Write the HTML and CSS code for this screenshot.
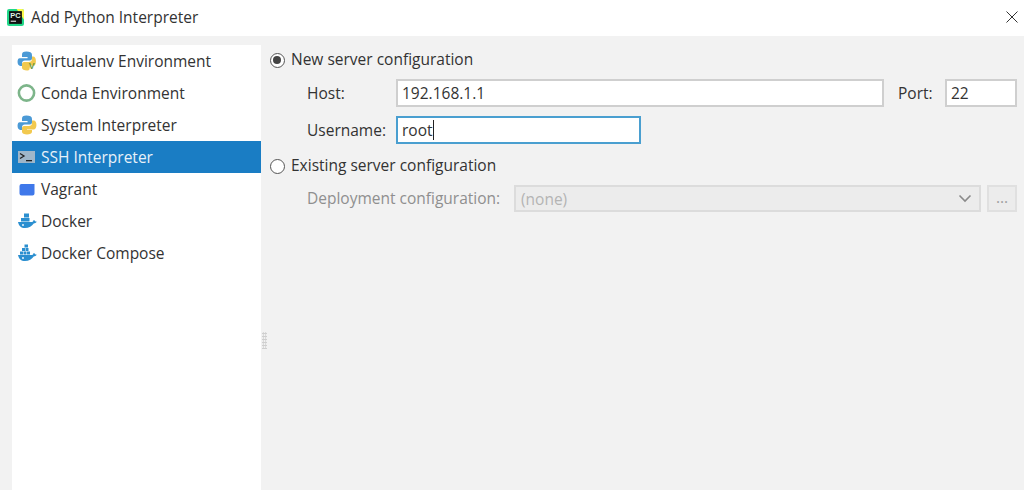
FILE: index.html
```html
<!DOCTYPE html>
<html lang="en">
<head>
  <meta charset="UTF-8" />
  <title>Add Python Interpreter</title>
  <link rel="stylesheet" href="styles.css">
</head>
<body>

  <div class="titlebar">
    <svg class="app-icon" width="17" height="17" viewBox="0 0 16 16">
      <rect x="0" y="0" width="16" height="16" rx="2" fill="#21d789"/>
      <path d="M9 0h5a2 2 0 0 1 2 2v8z" fill="#fcf84a"/>
      <rect x="2" y="2" width="12" height="12" fill="#111"/>
      <text x="3" y="8.5" class="app-icon-text">PC</text>
      <rect x="3.5" y="11" width="5" height="1" fill="#eee"/>
    </svg>
    <span class="title">Add Python Interpreter</span>
    <svg class="close" width="12" height="12" viewBox="0 0 12 12">
      <path d="M.5.5l11 11M11.500.5l-11 11" stroke="#333" stroke-width="1" fill="none"/>
    </svg>
  </div>

  <div class="content">
    <ul class="side">
      <li class="side-item">
        <svg class="venv-icon" width="20" height="20" viewBox="1 1 18 18">
          <path d="M9.500 1.500C6.500 1.500 5.500 2.500 5.500 4.500V6.500h5v1H3.500C2 7.500 1.500 9 1.500 11s1 3.500 2.500 3.500h1.500V12c0-1.500 1-2.500 2.500-2.500h4.500c1.500 0 2-1 2-2v-3c0-2-2-3-5-3z" fill="#4b9ad6"/>
          <path d="M14.500 6v2c0 2-1 3-3 3h-4c-1.500 0-2 1-2 2v3c0 1.500 2 2.500 4.500 2.500 1 0 1.500-.2 2-.4L13 14h4c.7-1 1-2.500 1-4 0-2.500-1-4-2.500-4z" fill="#f2c94f"/>
          <text x="11.500" y="17.500" class="venv-text">V</text>
        </svg>
        <span>Virtualenv Environment</span>
      </li>
      <li class="side-item">
        <svg width="20" height="20" viewBox="0 0 20 20">
          <circle cx="9.500" cy="10" r="7.600" fill="none" stroke="#7db58a" stroke-width="2.600"/>
        </svg>
        <span>Conda Environment</span>
      </li>
      <li class="side-item">
        <svg width="20" height="20" viewBox="1 1 18 18">
          <path d="M9.500 1.500C6.500 1.500 5.500 2.500 5.500 4.500V6.500h5v1H3.500C2 7.500 1.500 9 1.500 11s1 3.500 2.500 3.500h1.500V12c0-1.500 1-2.500 2.500-2.500h4.500c1.500 0 2-1 2-2v-3c0-2-2-3-5-3z" fill="#4b9ad6"/>
          <path d="M14.500 6v2c0 2-1 3-3 3h-4c-1.500 0-2 1-2 2v3c0 1.500 2 2.500 4.500 2.500s4.500-1 4.500-2.500v-1.500h-4.500V14h6c1.500 0 2.500-1.500 2.500-4s-1-4-2.500-4z" fill="#f2c94f"/>
        </svg>
        <span>System Interpreter</span>
      </li>
      <li class="side-item selected">
        <svg width="20" height="20" viewBox="0 0 20 20">
          <rect x="1" y="4" width="17" height="12" fill="#9fb6c9"/>
          <path d="M3 6.500l4 2.500-4 2.500" fill="none" stroke="#222" stroke-width="1.300"/>
          <rect x="9" y="13" width="6" height="1.300" fill="#222"/>
        </svg>
        <span>SSH Interpreter</span>
      </li>
      <li class="side-item">
        <svg width="20" height="20" viewBox="0 0 20 20">
          <path d="M4.500 5h13v9.500a2 2 0 0 1-2 2H4.500a2 2 0 0 1-2-2V7a2 2 0 0 1 2-2z" fill="#3f78ea"/>
        </svg>
        <span>Vagrant</span>
      </li>
      <li class="side-item">
        <svg width="20" height="20" viewBox="0 0 20 20">
          <rect x="7" y="2.500" width="5" height="4" fill="#2b8fd0"/>
          <rect x="4" y="7" width="8.500" height="3.500" fill="#2b8fd0"/>
          <path d="M1 11h14c1-.2 1.500-1 1.500-2 1 .2 1.500.7 2 1.500.500 0 1 .1 1.200.3-.7 1.200-1.700 1.700-3 1.700C15 15 12 17 8 17c-4 0-6-2-7-6z" fill="#2b8fd0"/>
          <circle cx="6" cy="14" r=".9" fill="#fff"/>
        </svg>
        <span>Docker</span>
      </li>
      <li class="side-item">
        <svg width="20" height="20" viewBox="0 0 20 20">
          <rect x="7.500" y="1.500" width="3.500" height="3" fill="#2b8fd0"/>
          <rect x="5" y="5" width="3" height="3" fill="#2b8fd0"/>
          <rect x="8.500" y="5" width="3" height="3" fill="#2b8fd0"/>
          <rect x="3" y="8.500" width="3" height="3" fill="#2b8fd0"/>
          <rect x="6.500" y="8.500" width="3" height="3" fill="#2b8fd0"/>
          <rect x="10" y="8.500" width="3" height="3" fill="#2b8fd0"/>
          <path d="M1 12h14c1-.2 1.500-1 1.500-2 1 .2 1.500.7 2 1.500.500 0 1 .1 1.200.3-.7 1.200-1.700 1.700-3 1.700C15 16 12 18 8 18c-4 0-6-2-7-6z" fill="#2b8fd0"/>
          <circle cx="6" cy="15" r=".9" fill="#fff"/>
        </svg>
        <span>Docker Compose</span>
      </li>
    </ul>

    <div class="grip"></div>

    <div class="panel">
      <div class="radio-row">
        <span class="radio checked"></span>
        <span class="radio-text">New server configuration</span>
      </div>

      <div class="host-row">
        <label class="field-label">Host:</label>
        <div class="input host-input">192.168.1.1</div>
        <label class="port-label">Port:</label>
        <div class="input port-input">22</div>
      </div>

      <div class="user-row">
        <label class="field-label">Username:</label>
        <div class="input user-input">root<span class="caret"></span></div>
      </div>

      <div class="radio-row existing">
        <span class="radio"></span>
        <span class="radio-text">Existing server configuration</span>
      </div>

      <div class="deploy-row">
        <label class="deploy-label">Deployment configuration:</label>
        <div class="select">
          <span>(none)</span>
          <svg width="14" height="9" viewBox="0 0 14 9">
            <path d="M1.500 1.500L7 7l5.500-5.500" fill="none" stroke="#8a8a8a" stroke-width="1.600"/>
          </svg>
        </div>
        <div class="dots-btn">...</div>
      </div>
    </div>
  </div>

</body>
</html>
```

FILE: styles.css
```css
* {
  box-sizing: border-box;
}

html, body {
  height: 100%;
}

body {
  margin: 0;
  width: 1024px;
  height: 490px;
  overflow: hidden;
  font-family: 'Open Sans', sans-serif;
  font-size: 15.5px;
  color: #333;
  background: #f2f2f2;
  display: flex;
  flex-direction: column;
}

.titlebar {
  height: 36px;
  background: #fff;
  display: flex;
  align-items: center;
  padding: 0 6px 2px 7px;
  flex-shrink: 0;
}

.app-icon {
  flex-shrink: 0;
}

.app-icon-text {
  font-family: 'Liberation Sans', sans-serif;
  font-size: 7px;
  font-weight: bold;
  fill: #dff5e8;
}

.venv-icon {
  overflow: visible;
}

.venv-text {
  font-family: 'Liberation Sans', sans-serif;
  font-size: 8px;
  font-weight: bold;
  fill: #6c9a3c;
}

.title {
  margin-left: 7px;
  flex: 1;
}

.content {
  flex: 1;
  display: flex;
  padding: 9px 0 0 12px;
  min-height: 0;
}

.side {
  width: 249px;
  background: #fff;
  list-style: none;
  margin: 0;
  padding: 0;
}

.side-item {
  height: 32px;
  display: flex;
  align-items: center;
  gap: 4px;
  padding-left: 5px;
}

.side-item svg {
  flex-shrink: 0;
}

.side-item.selected {
  background: #1a7dc4;
  color: #e8f1f8;
}

.grip {
  width: 8px;
  position: relative;
}

.grip::before {
  content: "";
  position: absolute;
  left: 1px;
  top: 287px;
  width: 5px;
  height: 17px;
  background: radial-gradient(circle, #cfcfcf 0 1px, transparent 1.200px) 0 0 / 2.500px 3px;
}

.panel {
  flex: 1;
  padding: 3px 7px 0 0;
}

.radio-row {
  height: 24px;
  display: flex;
  align-items: center;
  gap: 6px;
  padding-left: 1px;
}

.radio-text {
  padding-bottom: 2px;
}

.radio {
  width: 15px;
  height: 15px;
  border: 1.500px solid #555;
  border-radius: 50%;
  background: #fff;
  position: relative;
  flex-shrink: 0;
}

.radio.checked::after {
  content: "";
  position: absolute;
  left: 2px;
  top: 2px;
  width: 8px;
  height: 8px;
  border-radius: 50%;
  background: #444;
}

.host-row, .user-row, .deploy-row {
  display: flex;
  align-items: center;
  padding-left: 38px;
}

.host-row {
  margin-top: 7px;
}

.user-row {
  margin-top: 9px;
}

.field-label {
  width: 89px;
  flex-shrink: 0;
}

.input {
  height: 28px;
  background: #fff;
  border: 2px solid #cfcfcf;
  padding-left: 4px;
  display: flex;
  align-items: center;
}

.host-input {
  width: 488px;
}

.port-label {
  margin-left: 14px;
  width: 47px;
}

.port-input {
  width: 72px;
}

.user-input {
  width: 245px;
  border-color: #4a9fd0;
}

.caret {
  width: 1px;
  height: 20px;
  background: #222;
}

.existing {
  margin-top: 10px;
}

.deploy-row {
  margin-top: 7px;
  color: #8f8f8f;
}

.deploy-label {
  width: 207px;
  flex-shrink: 0;
  padding-bottom: 2px;
}

.select {
  width: 467px;
  height: 27px;
  background: #ececec;
  border: 2px solid #dcdcdc;
  padding: 0 7px 0 5px;
  display: flex;
  align-items: center;
  justify-content: space-between;
  color: #b4b4b4;
}

.dots-btn {
  width: 30px;
  height: 27px;
  margin-left: 6px;
  background: #ececec;
  border: 2px solid #e0e0e0;
  color: #a0a0a0;
  text-align: center;
  line-height: 20px;
}
```
